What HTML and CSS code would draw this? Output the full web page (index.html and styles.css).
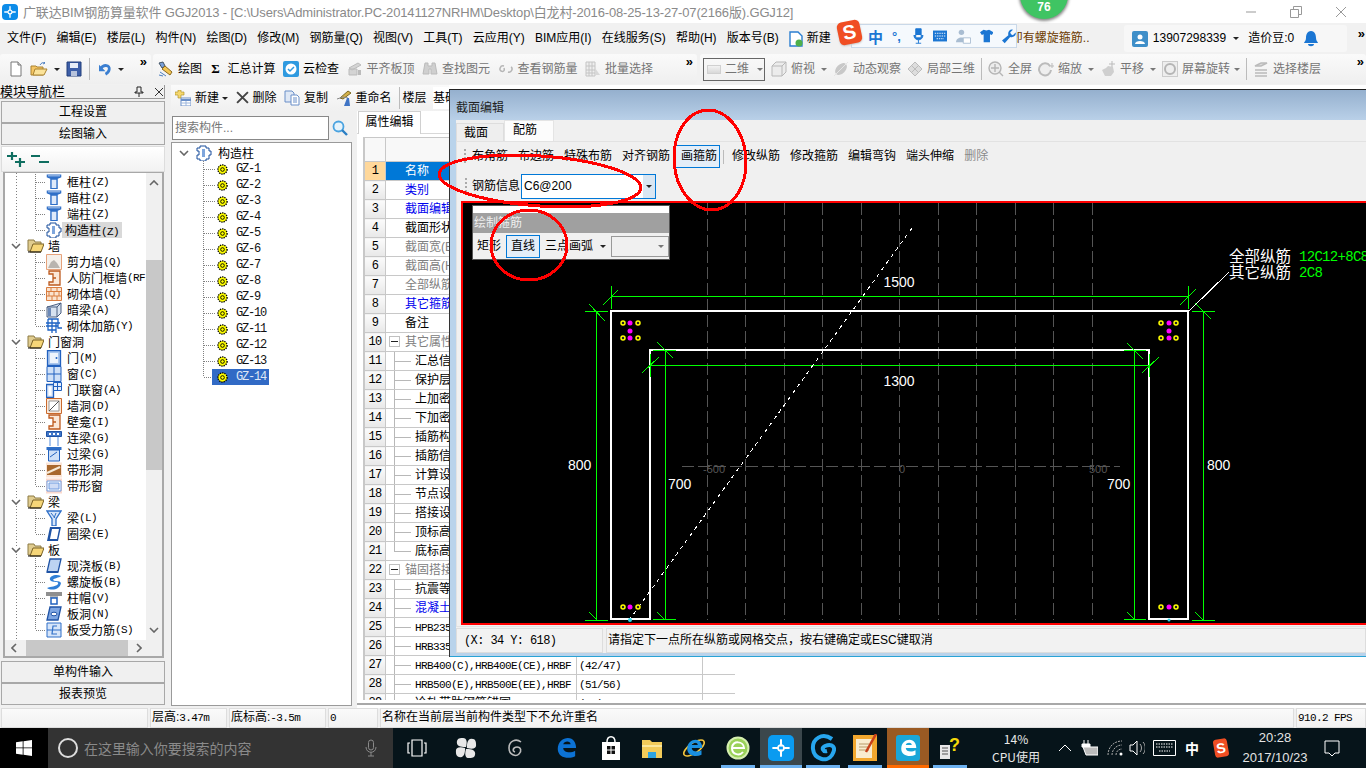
FILE: index.html
```html
<!DOCTYPE html>
<html lang="zh-CN">
<head>
<meta charset="utf-8">
<title>广联达BIM钢筋算量软件 GGJ2013</title>
<link rel="stylesheet" href="styles.css">
</head>
<body>
<svg class="sprite" width="0" height="0">
  <symbol id="i-new" viewBox="0 0 16 16"><path d="M3 1h7l3 3v11H3z" fill="#fff" stroke="#777"/><path d="M10 1v3h3" fill="#ddd" stroke="#777"/></symbol>
  <symbol id="i-open" viewBox="0 0 18 16"><path d="M1 5h5l1 1h6v8H1z" fill="#f4c563" stroke="#a98230"/><path d="M3 14l2-6h12l-3 6z" fill="#fbe39a" stroke="#a98230"/><path d="M10 4c1-2 3-3 5-2l-1-1m1 1l-2 1" fill="none" stroke="#4d7fc0"/></symbol>
  <symbol id="i-save" viewBox="0 0 16 16"><path d="M1 1h14v14H1z" fill="#3d5fa8" stroke="#233f7a"/><path d="M4 2h8v5H4z" fill="#e8eef8"/><path d="M5 10h6v5H5z" fill="#b7c3dc"/></symbol>
  <symbol id="i-undo" viewBox="0 0 14 16"><path d="M2 7C5 2 12 3 11 8c-.4 2.400-2 4-4 5" fill="none" stroke="#3b7fd1" stroke-width="3"/><path d="M0 3v7h7z" fill="#3b7fd1"/></symbol>
  <symbol id="i-draw" viewBox="0 0 16 16"><path d="M1 2l4-1 2 4-3 2z" fill="#7aa0d8" stroke="#456"/><path d="M4 8l3-3 7 6-2 3z" fill="#f3c552" stroke="#8a6a20"/><path d="M2 11l6 4M1 14l4 1" stroke="#4d7fc0"/></symbol>
  <symbol id="i-cloud" viewBox="0 0 16 16"><rect width="16" height="16" rx="2" fill="#2f9ae0"/><circle cx="8" cy="8" r="5.500" fill="#fff"/><path d="M5 8l2 2 4-4" fill="none" stroke="#2f9ae0" stroke-width="1.500"/></symbol>
  <symbol id="i-gear" viewBox="0 0 16 16"><path d="M2 7l9-5 3 2-9 5zM2 8v6h8V8z" fill="#d4d4d4" stroke="#bbb"/><path d="M11 9h3v5h-3z" fill="#bbb"/></symbol>
  <symbol id="i-bino" viewBox="0 0 16 16"><path d="M3 2h3v3h4V2h3l2 11H9V8H7v5H1z" fill="#cfcfcf" stroke="#bbb"/></symbol>
  <symbol id="i-link" viewBox="0 0 16 16"><path d="M6 5C2 4 1 9 3 10s4 0 3-3M10 11c4 1 5-4 3-5" fill="none" stroke="#b5b5b5" stroke-width="1.500"/></symbol>
  <symbol id="i-batch" viewBox="0 0 16 16"><path d="M1 1h9v14H1zM1 5h9M1 9h9M1 12h9M4 1v14M7 1v14" fill="#eee" stroke="#c4c4c4"/><path d="M10 7l5 7h-5z" fill="#d8d8d8"/></symbol>
  <symbol id="i-cube" viewBox="0 0 16 16"><path d="M1 5l4-4h10v10l-4 4H1z" fill="#ececec" stroke="#b8b8b8"/><path d="M1 5h10v10M11 5l4-4" fill="none" stroke="#b8b8b8"/></symbol>
  <symbol id="i-orbit" viewBox="0 0 16 16"><ellipse cx="8" cy="8" rx="4.500" ry="7" transform="rotate(45 8 8)" fill="#c8c8c8"/><path d="M1 15L15 1" stroke="#e5e5e5"/></symbol>
  <symbol id="i-box" viewBox="0 0 16 16"><path d="M8 1l7 7-7 7-7-7z" fill="#ddd" stroke="#bbb"/><path d="M4 4l8 8M12 4l-8 8" stroke="#bbb"/></symbol>
  <symbol id="i-zoomf" viewBox="0 0 16 16"><circle cx="7" cy="7" r="6" fill="#ececec" stroke="#b5b5b5" stroke-width="1.400"/><path d="M7 3v8M3 7h8M11 11l4 4" stroke="#b5b5b5" stroke-width="1.400"/></symbol>
  <symbol id="i-zoom" viewBox="0 0 16 16"><path d="M12 5a6 6 0 1 0 1 4" fill="#eee" stroke="#bbb" stroke-width="2"/><path d="M14 2v5M11 5h5" stroke="#bbb"/></symbol>
  <symbol id="i-pan" viewBox="0 0 16 16"><path d="M2 9l4-2 2-2 5 1 1 5-3 4H5z" fill="#cfcfcf"/><path d="M12 0v6M9 3h6" stroke="#bbb"/></symbol>
  <symbol id="i-rot" viewBox="0 0 16 16"><rect x=".5" y=".5" width="15" height="15" fill="#eee" stroke="#ccc"/><circle cx="8" cy="8" r="5" fill="none" stroke="#b5b5b5" stroke-width="2"/></symbol>
  <symbol id="i-floor" viewBox="0 0 16 16"><path d="M2 5l6-3h6L8 5zM2 9h12M2 12h12M2 15h12" fill="#ddd" stroke="#bbb" stroke-width="1.400"/></symbol>
  <symbol id="i-newb" viewBox="0 0 16 16"><path d="M0 2h3V0h3v2h3v3H6v3H3V5H0z" fill="#f5d76e" stroke="#a88a20" stroke-width=".6"/><path d="M6 8h10v8H6z" fill="#fff" stroke="#6a8fc8"/><path d="M6 10h10" stroke="#6a8fc8" stroke-width="2"/><path d="M11 11v5M6 13h10" stroke="#9db6dc"/></symbol>
  <symbol id="i-copy" viewBox="0 0 16 16"><path d="M1 1h7l2 2v9H1z" fill="#dfe8f5" stroke="#6a8fc8"/><path d="M7 5h6l2 2v8H7z" fill="#fff" stroke="#6a8fc8"/><path d="M9 8h4M9 10h4M9 12h4" stroke="#6a8fc8"/></symbol>
  <symbol id="i-rename" viewBox="0 0 16 16"><path d="M4 8l8-7 3 2-8 6z" fill="#d3b04a" stroke="#7c6a20"/><path d="M1 9l6-2 5 1" fill="none" stroke="#888"/><path d="M8 16l3-8h2l1 8z" fill="#3f74c5"/></symbol>
  <symbol id="i-col" viewBox="0 0 16 17"><path d="M0 .5h16v3l-4 1.500v11H4V5L0 3.500z" fill="#2f6fc7"/><path d="M5.500 6h5v9h-5zM1.500 1.500h13v1h-13z" fill="#dfeafa"/></symbol>
  <symbol id="i-gz" viewBox="0 0 16 16"><path d="M4 1h6v2h3v3h2v4h-2v4h-3v2H4v-2H1v-4h2V6H1V3h3z" fill="#fff" stroke="#1b4f9c"/><path d="M6 4h3v8H6z" fill="#7fa6dc"/></symbol>
  <symbol id="i-shear" viewBox="0 0 16 16"><path d="M.5 .5h15v15H.5z" fill="#f5f0ea" stroke="#e6a27b"/><path d="M2 14l3-6 3-2 3 3 3 5z" fill="#b9b4ae"/></symbol>
  <symbol id="i-frame" viewBox="0 0 16 16"><path d="M3 1h11v14H3v-3h4V4H3zM7 8h3" fill="#fbe8d8" stroke="#bd5a1e" stroke-width="1.300"/></symbol>
  <symbol id="i-brick" viewBox="0 0 16 16"><path d="M.5 1.500h15v13H.5zM.5 5.500h15M.5 10h15M5 1.500v4M11 1.500v4M3 5.500V10M8 5.500V10M13 5.500V10M6 10v4.500M11 10v4.500" fill="#fae3cf" stroke="#d97c3f"/></symbol>
  <symbol id="i-beam" viewBox="0 0 16 16"><path d="M1 5l4-1 10-3v10l-4 4H1z" fill="#d7e2f0" stroke="#4a5e80"/><path d="M1 5h10v10M11 5l4-4" fill="none" stroke="#4a5e80"/><path d="M2 6h3v8H2z" fill="#6c89b8"/></symbol>
  <symbol id="i-add" viewBox="0 0 16 16"><path d="M2 1h10v9h4M2 1v11h8M6 1v14M10 5v10M0 5h14M0 8h12" fill="none" stroke="#1e63c4" stroke-width="1.300"/></symbol>
  <symbol id="i-door" viewBox="0 0 16 16"><path d="M1.500 .5h13v15h-13z" fill="#a9c6ee" stroke="#2161bf" stroke-width="1.300"/><path d="M4 3h8v10H4z" fill="#eef4fc"/><circle cx="10.500" cy="8" r="1" fill="#2161bf"/></symbol>
  <symbol id="i-win" viewBox="0 0 16 16"><path d="M1 .5h14v15H1z" fill="#cfe0f7" stroke="#2161bf"/><path d="M8 .5v15M1 8h14" stroke="#2161bf"/></symbol>
  <symbol id="i-dw" viewBox="0 0 16 16"><path d="M.5 2.500h7v13h-7z" fill="#cfe0f7" stroke="#2161bf" stroke-width="1.300"/><path d="M2.500 4.500h3v9h-3z" fill="#fff"/><path d="M7.500 .5h8v8h-8zM11.500 .5v8M7.500 4.500h8" fill="#e5eefb" stroke="#2161bf"/></symbol>
  <symbol id="i-hole" viewBox="0 0 16 16"><path d="M.5 .5h15v15H.5z" fill="#fbe8d8" stroke="#c9692c"/><path d="M3 3h10v10H3z" fill="#fff" stroke="#999"/><path d="M3 13L13 3" stroke="#555"/></symbol>
  <symbol id="i-lb" viewBox="0 0 16 16"><path d="M.5 1.500h15v5H.5z" fill="#3f76c8" stroke="#1f53a5"/><path d="M3 3h2v2H3zM7 3h2v2H7zM11 3h2v2h-2z" fill="#fff"/><path d="M3 7h2v9H3zM11 7h2v9h-2z" fill="#a9c6ee"/></symbol>
  <symbol id="i-gl" viewBox="0 0 16 16"><path d="M.5 1h15v3H.5z" fill="#2f6fc7"/><path d="M2.500 4h11v11h-11z" fill="#cfe0f7" stroke="#2161bf"/><path d="M4 11l7-5" stroke="#2161bf"/></symbol>
  <symbol id="i-sh" viewBox="0 0 16 16"><path d="M0 .5h16v15H0z" fill="#fbe5d8"/><path d="M1 3h14v10H1z" fill="#a8682e"/><path d="M1 11l13-6" stroke="#f6ead8" stroke-width="2"/></symbol>
  <symbol id="i-sw" viewBox="0 0 16 16"><path d="M0 .5h16v15H0z" fill="#fbd9cd"/><path d="M1 3h14v10H1z" fill="#fff" stroke="#6f9be0"/><path d="M3 5h10v6H3z" fill="#cfdcf5" stroke="#6f9be0"/></symbol>
  <symbol id="i-l" viewBox="0 0 16 16"><path d="M1 1h14l-5 8v7H6V9z" fill="#d6e5f9" stroke="#2f6fc7" stroke-width="1.300"/><path d="M5 3l4 5M10 3L8 8" stroke="#2f6fc7"/></symbol>
  <symbol id="i-q" viewBox="0 0 16 16"><path d="M4 1h11l-3 14H1z" fill="#1f53a5"/><path d="M6 3h7l-2 10H4z" fill="#fff"/></symbol>
  <symbol id="i-xj" viewBox="0 0 16 16"><path d="M4 1h11l-3 13H1z" fill="#bcd3f2" stroke="#1f53a5" stroke-width="1.300"/><path d="M1 14h11" stroke="#1f53a5" stroke-width="2"/></symbol>
  <symbol id="i-lx" viewBox="0 0 16 16"><path d="M15 2C8-1 1 4 5 7c4 2 8 0 7 3-2 3-7 2-11 4 4 3 13 2 14-5-2-3-6-1-8-3 1-2 6-2 8-4z" fill="#2f7fd7"/></symbol>
  <symbol id="i-cap" viewBox="0 0 16 16"><path d="M0 2h16v4H0z" fill="#8f8f8f"/><path d="M4 6h8v2H4z" fill="#b5b5b5"/><path d="M5 8h6v6H5z" fill="#fff" stroke="#2161bf" stroke-width="1.500"/></symbol>
  <symbol id="i-bd" viewBox="0 0 16 16"><path d="M4 1h11l-3 13H1z" fill="#7ea6e2" stroke="#1f53a5" stroke-width="1.300"/><ellipse cx="8" cy="8" rx="3" ry="1.800" fill="#fff" stroke="#1f53a5"/></symbol>
  <symbol id="i-bs" viewBox="0 0 16 16"><path d="M1 1h14v14H1z" fill="#d6e5f9" stroke="#2f6fc7"/><path d="M11 4H7L6 12h5M1 8h14" fill="none" stroke="#2f6fc7" stroke-width="1.200"/></symbol>
  <symbol id="i-folder" viewBox="0 0 17 14"><path d="M1 1h6l1 2h6v9H1z" fill="#e0cc8f" stroke="#8c7a45"/><path d="M3 13l3-8h11l-3 8z" fill="#f6d678" stroke="#7a6226"/><path d="M1 13h13" stroke="#111"/></symbol>
  <symbol id="i-rebar" viewBox="0 0 12 12"><circle cx="6" cy="6" r="5" fill="#ff0" stroke="#000" stroke-width="1.500" stroke-dasharray="1.500 1"/><circle cx="6" cy="6" r="2" fill="#ff0" stroke="#000"/></symbol>
  <symbol id="i-chev" viewBox="0 0 10 6"><path d="M1 1l4 4 4-4" fill="none" stroke="#666" stroke-width="1.600"/></symbol>
  <symbol id="i-mag" viewBox="0 0 16 16"><circle cx="6.500" cy="6.500" r="5" fill="#e6f3fb" stroke="#4aa3e0" stroke-width="1.800"/><path d="M10 10l5 5" stroke="#2a7fc4" stroke-width="2.400"/></symbol>
  <symbol id="i-win10" viewBox="0 0 16 16"><path d="M0 2.300l6.700-1v6.200H0zM7.500 1.200L16 0v7.500H7.500zM0 8.300h6.700v6.400L0 13.800zM7.500 8.300H16V16l-8.500-1.200z" fill="#fff"/></symbol>
  <symbol id="i-mic" viewBox="0 0 12 18"><rect x="3.500" y="1" width="5" height="10" rx="2.500" fill="none" stroke="currentColor"/><path d="M1 8c0 7 10 7 10 0M6 13v4M3 17h6" fill="none" stroke="currentColor"/></symbol>
  <symbol id="i-fan" viewBox="0 0 24 24"><path d="M12 11C9 11 2 11 2 6s4-5 7-5 5 3 3 10zM13 12c0-3 0-10 5-10s5 4 5 7-3 5-10 3zM12 13c3 0 10 0 10 5s-4 5-7 5-5-3-3-10zM11 12c0 3 0 10-5 10s-5-4-5-7 3-5 10-3z" fill="#e8e8e8"/></symbol>
  <symbol id="i-e" viewBox="0 0 24 24"><path d="M3 13C3 5 9 1 14 1c6 0 9 5 9 11H9c0 5 8 6 13 3v6c-8 4-19 1-19-8zM9 8h8c0-4-7-4-8 0z" fill="currentColor"/></symbol>
  <symbol id="i-gld" viewBox="0 0 16 16"><path d="M8 1v5M8 10v5M1 8h4M11 8h4" fill="none" stroke="#fff" stroke-width="1.800" stroke-linecap="round"/><circle cx="8" cy="8" r="2.600" fill="none" stroke="#fff" stroke-width="1.500"/></symbol>
</svg>

<header class="titlebar">
  <span class="app-logo"><svg width="12" height="12" viewBox="0 0 16 16"><use href="#i-gld"/></svg></span>
  <span class="title-text">广联达BIM钢筋算量软件 GGJ2013 - [C:\Users\Administrator.PC-20141127NRHM\Desktop\白龙村-2016-08-25-13-27-07(2166版).GGJ12]</span>
  <span class="win-ctrls">
    <svg width="12" height="12" viewBox="0 0 12 12"><path d="M1 6h10" stroke="#999"/></svg>
    <svg width="12" height="12" viewBox="0 0 12 12"><path d="M.5 3.500h8v8h-8zM3.500 3V.5h8v8H9" fill="none" stroke="#999"/></svg>
    <svg width="12" height="12" viewBox="0 0 12 12"><path d="M1 1l10 10M11 1L1 11" stroke="#999"/></svg>
  </span>
</header>

<nav class="menubar">
  <div class="menus">
    <span>文件(F)</span><span>编辑(E)</span><span>楼层(L)</span><span>构件(N)</span><span>绘图(D)</span><span>修改(M)</span><span>钢筋量(Q)</span><span>视图(V)</span><span>工具(T)</span><span>云应用(Y)</span><span>BIM应用(I)</span><span>在线服务(S)</span><span>帮助(H)</span><span>版本号(B)</span>
  </div>
  <div class="newtask"><svg class="ic" viewBox="0 0 16 16"><path d="M2 1h8l4 4v10H2z" fill="#fff" stroke="#2b7fd1" stroke-width="1.400"/><circle cx="11" cy="12" r="3.500" fill="#4fb04a"/></svg><span>新建</span></div>
  <div class="marquee">即有螺旋箍筋..</div>
  <div class="account">
    <span class="avatar"><svg width="10" height="10" viewBox="0 0 10 10"><circle cx="5" cy="3" r="2.500" fill="#fff"/><path d="M0 10c0-4 10-4 10 0z" fill="#fff"/></svg></span>
    <span>13907298339</span><i class="caret"></i>
    <span class="beans">造价豆:0</span>
    <svg class="bell" width="14" height="16" viewBox="0 0 14 16"><path d="M7 0c4 0 5 4 5 7s2 4 2 5H0c0-1 2-2 2-5s1-7 5-7zM4 13h6c0 3-6 3-6 0z" fill="#1b76d3"/></svg>
  </div>
  <span class="more">»</span>
</nav>

<div class="toolbar">
  <div class="tseg first">
    <svg class="ic" viewBox="0 0 16 16"><use href="#i-new"/></svg>
    <svg class="ic ic18" viewBox="0 0 18 16"><use href="#i-open"/></svg><i class="caret"></i>
    <svg class="ic" viewBox="0 0 16 16"><use href="#i-save"/></svg>
    <span class="sep"></span>
    <svg class="ic-s" viewBox="0 0 14 16"><use href="#i-undo"/></svg><i class="caret"></i>
    <span class="more">»</span>
  </div>
  <div class="tseg second">
    <span class="tbtn"><svg class="ic" viewBox="0 0 16 16"><use href="#i-draw"/></svg>绘图</span>
    <span class="tbtn"><b class="sigma">Σ</b>汇总计算</span>
    <span class="tbtn"><svg class="ic" viewBox="0 0 16 16"><use href="#i-cloud"/></svg>云检查</span>
    <span class="tbtn dis"><svg class="ic" viewBox="0 0 16 16"><use href="#i-gear"/></svg>平齐板顶</span>
    <span class="tbtn dis"><svg class="ic" viewBox="0 0 16 16"><use href="#i-bino"/></svg>查找图元</span>
    <span class="tbtn dis"><svg class="ic" viewBox="0 0 16 16"><use href="#i-link"/></svg>查看钢筋量</span>
    <span class="tbtn dis"><svg class="ic" viewBox="0 0 16 16"><use href="#i-batch"/></svg>批量选择</span>
    <span class="more">»</span>
  </div>
  <div class="tseg third">
    <span class="combo"><i class="swatch"></i>二维<i class="caret gray"></i></span>
    <span class="tbtn dis"><svg class="ic" viewBox="0 0 16 16"><use href="#i-cube"/></svg>俯视<i class="caret gray"></i></span>
    <span class="tbtn dis"><svg class="ic" viewBox="0 0 16 16"><use href="#i-orbit"/></svg>动态观察</span>
    <span class="tbtn dis"><svg class="ic" viewBox="0 0 16 16"><use href="#i-box"/></svg>局部三维</span>
    <span class="sep"></span>
    <span class="tbtn dis"><svg class="ic" viewBox="0 0 16 16"><use href="#i-zoomf"/></svg>全屏</span>
    <span class="tbtn dis"><svg class="ic" viewBox="0 0 16 16"><use href="#i-zoom"/></svg>缩放<i class="caret gray"></i></span>
    <span class="tbtn dis"><svg class="ic" viewBox="0 0 16 16"><use href="#i-pan"/></svg>平移<i class="caret gray"></i></span>
    <span class="tbtn dis"><svg class="ic" viewBox="0 0 16 16"><use href="#i-rot"/></svg>屏幕旋转<i class="caret gray tight"></i></span>
    <span class="sep"></span>
    <span class="tbtn dis"><svg class="ic" viewBox="0 0 16 16"><use href="#i-floor"/></svg>选择楼层</span>
    <span class="more">»</span>
  </div>
</div>

<main class="main">
  <aside class="nav">
    <div class="nav-head"><span>模块导航栏</span>
      <svg width="10" height="11" viewBox="0 0 10 11"><path d="M3 1h4v5h2v1H1V6h2zM5 7v4" fill="none" stroke="#222"/></svg>
      <svg width="8" height="8" viewBox="0 0 8 8"><path d="M0 0l8 8M8 0L0 8" stroke="#333"/></svg>
    </div>
    <div class="nav-btn">工程设置</div>
    <div class="nav-btn">绘图输入</div>
    <div class="nav-tools">
      <svg width="18" height="15" viewBox="0 0 18 15"><path d="M0 4h10M5 0v8M8 10h10M13 6v9" stroke="#0f6e60" stroke-width="2.200"/></svg>
      <svg width="18" height="15" viewBox="0 0 18 15"><path d="M0 4h9M8 10h10" stroke="#0f6e60" stroke-width="2.200"/></svg>
    </div>
    <div class="nav-tree">
      <div class="tree-body simsun">
        <div class="kids">
          <div class="kid"><svg class="ic" viewBox="0 0 16 17"><use href="#i-col"/></svg>框柱<i class="m">(Z)</i></div>
          <div class="kid"><svg class="ic" viewBox="0 0 16 17"><use href="#i-col"/></svg>暗柱<i class="m">(Z)</i></div>
          <div class="kid"><svg class="ic" viewBox="0 0 16 17"><use href="#i-col"/></svg>端柱<i class="m">(Z)</i></div>
          <div class="kid"><svg class="ic" viewBox="0 0 16 16"><use href="#i-gz"/></svg><span class="sel-gray">构造柱<i class="m">(Z)</i></span></div>
        </div>
        <div class="grp"><svg class="chev" viewBox="0 0 10 6"><use href="#i-chev"/></svg><svg class="fold" viewBox="0 0 17 14"><use href="#i-folder"/></svg>墙</div>
        <div class="kids">
          <div class="kid"><svg class="ic" viewBox="0 0 16 16"><use href="#i-shear"/></svg>剪力墙<i class="m">(Q)</i></div>
          <div class="kid"><svg class="ic" viewBox="0 0 16 16"><use href="#i-frame"/></svg>人防门框墙<i class="m">(RF</i></div>
          <div class="kid"><svg class="ic" viewBox="0 0 16 16"><use href="#i-brick"/></svg>砌体墙<i class="m">(Q)</i></div>
          <div class="kid"><svg class="ic" viewBox="0 0 16 16"><use href="#i-beam"/></svg>暗梁<i class="m">(A)</i></div>
          <div class="kid"><svg class="ic" viewBox="0 0 16 16"><use href="#i-add"/></svg>砌体加筋<i class="m">(Y)</i></div>
        </div>
        <div class="grp"><svg class="chev" viewBox="0 0 10 6"><use href="#i-chev"/></svg><svg class="fold" viewBox="0 0 17 14"><use href="#i-folder"/></svg>门窗洞</div>
        <div class="kids">
          <div class="kid"><svg class="ic" viewBox="0 0 16 16"><use href="#i-door"/></svg>门<i class="m">(M)</i></div>
          <div class="kid"><svg class="ic" viewBox="0 0 16 16"><use href="#i-win"/></svg>窗<i class="m">(C)</i></div>
          <div class="kid"><svg class="ic" viewBox="0 0 16 16"><use href="#i-dw"/></svg>门联窗<i class="m">(A)</i></div>
          <div class="kid"><svg class="ic" viewBox="0 0 16 16"><use href="#i-hole"/></svg>墙洞<i class="m">(D)</i></div>
          <div class="kid"><svg class="ic" viewBox="0 0 16 16"><use href="#i-frame"/></svg>壁龛<i class="m">(I)</i></div>
          <div class="kid"><svg class="ic" viewBox="0 0 16 16"><use href="#i-lb"/></svg>连梁<i class="m">(G)</i></div>
          <div class="kid"><svg class="ic" viewBox="0 0 16 16"><use href="#i-gl"/></svg>过梁<i class="m">(G)</i></div>
          <div class="kid"><svg class="ic" viewBox="0 0 16 16"><use href="#i-sh"/></svg>带形洞</div>
          <div class="kid"><svg class="ic" viewBox="0 0 16 16"><use href="#i-sw"/></svg>带形窗</div>
        </div>
        <div class="grp"><svg class="chev" viewBox="0 0 10 6"><use href="#i-chev"/></svg><svg class="fold" viewBox="0 0 17 14"><use href="#i-folder"/></svg>梁</div>
        <div class="kids">
          <div class="kid"><svg class="ic" viewBox="0 0 16 16"><use href="#i-l"/></svg>梁<i class="m">(L)</i></div>
          <div class="kid"><svg class="ic" viewBox="0 0 16 16"><use href="#i-q"/></svg>圈梁<i class="m">(E)</i></div>
        </div>
        <div class="grp"><svg class="chev" viewBox="0 0 10 6"><use href="#i-chev"/></svg><svg class="fold" viewBox="0 0 17 14"><use href="#i-folder"/></svg>板</div>
        <div class="kids">
          <div class="kid"><svg class="ic" viewBox="0 0 16 16"><use href="#i-xj"/></svg>现浇板<i class="m">(B)</i></div>
          <div class="kid"><svg class="ic" viewBox="0 0 16 16"><use href="#i-lx"/></svg>螺旋板<i class="m">(B)</i></div>
          <div class="kid"><svg class="ic" viewBox="0 0 16 16"><use href="#i-cap"/></svg>柱帽<i class="m">(V)</i></div>
          <div class="kid"><svg class="ic" viewBox="0 0 16 16"><use href="#i-bd"/></svg>板洞<i class="m">(N)</i></div>
          <div class="kid"><svg class="ic" viewBox="0 0 16 16"><use href="#i-bs"/></svg>板受力筋<i class="m">(S)</i></div>
        </div>
      </div>
      <div class="vscroll"><svg class="sb-a" width="10" height="6" viewBox="0 0 10 6"><path d="M1 5l4-4 4 4" fill="none" stroke="#666" stroke-width="1.600"/></svg><i class="vthumb"></i><svg class="sb-a" width="10" height="6" viewBox="0 0 10 6"><path d="M1 1l4 4 4-4" fill="none" stroke="#666" stroke-width="1.600"/></svg></div>
      <div class="hscroll"><svg width="6" height="10" viewBox="0 0 6 10"><path d="M5 1L1 5l4 4" fill="none" stroke="#666" stroke-width="1.600"/></svg><i class="hthumb"></i><svg width="6" height="10" viewBox="0 0 6 10"><path d="M1 1l4 4-4 4" fill="none" stroke="#666" stroke-width="1.600"/></svg></div>
      <div class="corner"></div>
    </div>
    <div class="nav-btn low">单构件输入</div>
    <div class="nav-btn">报表预览</div>
  </aside>

  <section class="work">
    <div class="cmdbar">
      <span class="cbtn"><svg class="ic" viewBox="0 0 16 16"><use href="#i-newb"/></svg>新建<i class="caret"></i></span>
      <span class="cbtn"><svg class="ic-x" viewBox="0 0 12 12"><path d="M1 1l10 10M11 1L1 11" stroke="#444" stroke-width="1.800"/></svg>删除</span>
      <span class="cbtn"><svg class="ic" viewBox="0 0 16 16"><use href="#i-copy"/></svg>复制</span>
      <span class="cbtn"><svg class="ic" viewBox="0 0 16 16"><use href="#i-rename"/></svg>重命名</span>
      <span class="sep"></span>
      <span class="cbtn">楼层</span>
      <span class="cbtn white">基础层</span>
    </div>
    <div class="work-row">
      <div class="mid">
        <div class="search"><span class="search-in">搜索构件...</span><svg class="ic" viewBox="0 0 16 16"><use href="#i-mag"/></svg></div>
        <div class="mid-tree simsun">
          <div class="root"><svg class="chev" viewBox="0 0 10 6"><use href="#i-chev"/></svg><svg class="ic" viewBox="0 0 16 16"><use href="#i-gz"/></svg>构造柱</div>
          <div class="gz"><svg class="reb" viewBox="0 0 12 12"><use href="#i-rebar"/></svg><i class="m">GZ-1</i></div>
          <div class="gz"><svg class="reb" viewBox="0 0 12 12"><use href="#i-rebar"/></svg><i class="m">GZ-2</i></div>
          <div class="gz"><svg class="reb" viewBox="0 0 12 12"><use href="#i-rebar"/></svg><i class="m">GZ-3</i></div>
          <div class="gz"><svg class="reb" viewBox="0 0 12 12"><use href="#i-rebar"/></svg><i class="m">GZ-4</i></div>
          <div class="gz"><svg class="reb" viewBox="0 0 12 12"><use href="#i-rebar"/></svg><i class="m">GZ-5</i></div>
          <div class="gz"><svg class="reb" viewBox="0 0 12 12"><use href="#i-rebar"/></svg><i class="m">GZ-6</i></div>
          <div class="gz"><svg class="reb" viewBox="0 0 12 12"><use href="#i-rebar"/></svg><i class="m">GZ-7</i></div>
          <div class="gz"><svg class="reb" viewBox="0 0 12 12"><use href="#i-rebar"/></svg><i class="m">GZ-8</i></div>
          <div class="gz"><svg class="reb" viewBox="0 0 12 12"><use href="#i-rebar"/></svg><i class="m">GZ-9</i></div>
          <div class="gz"><svg class="reb" viewBox="0 0 12 12"><use href="#i-rebar"/></svg><i class="m">GZ-10</i></div>
          <div class="gz"><svg class="reb" viewBox="0 0 12 12"><use href="#i-rebar"/></svg><i class="m">GZ-11</i></div>
          <div class="gz"><svg class="reb" viewBox="0 0 12 12"><use href="#i-rebar"/></svg><i class="m">GZ-12</i></div>
          <div class="gz"><svg class="reb" viewBox="0 0 12 12"><use href="#i-rebar"/></svg><i class="m">GZ-13</i></div>
          <div class="gz sel"><span class="gz-pick"><svg class="reb" viewBox="0 0 12 12"><use href="#i-rebar"/></svg><i class="m">GZ-14</i></span></div>
        </div>
      </div>
      <div class="props">
        <div class="tabbar"><span class="tab-on">属性编辑</span></div>
        <div class="props-body">
          <div class="grid-wrap">
            <table class="grid">
              <colgroup><col class="c0"><col class="c1"><col class="c2"><col class="c3"></colgroup>
              <tr class="head"><th></th><th></th><th></th><th></th></tr>
              <tr class="cur"><th class="hot">1</th><td>名称</td><td></td><td></td></tr>
              <tr><th>2</th><td class="blue">类别</td><td></td><td></td></tr>
              <tr><th>3</th><td class="blue">截面编辑</td><td></td><td></td></tr>
              <tr><th>4</th><td>截面形状</td><td></td><td></td></tr>
              <tr><th>5</th><td class="gr">截面宽(B边)</td><td></td><td></td></tr>
              <tr><th>6</th><td class="gr">截面高(H边)</td><td></td><td></td></tr>
              <tr><th>7</th><td class="gr">全部纵筋</td><td></td><td></td></tr>
              <tr><th>8</th><td class="blue">其它箍筋</td><td></td><td></td></tr>
              <tr><th>9</th><td>备注</td><td></td><td></td></tr>
              <tr><th>10</th><td class="sec"><i class="minus"></i>其它属性</td><td></td><td></td></tr>
              <tr><th>11</th><td class="tw">汇总信息</td><td></td><td></td></tr>
              <tr><th>12</th><td class="tw">保护层厚度</td><td></td><td></td></tr>
              <tr><th>13</th><td class="tw">上加密范围</td><td></td><td></td></tr>
              <tr><th>14</th><td class="tw">下加密范围</td><td></td><td></td></tr>
              <tr><th>15</th><td class="tw">插筋构造</td><td></td><td></td></tr>
              <tr><th>16</th><td class="tw">插筋信息</td><td></td><td></td></tr>
              <tr><th>17</th><td class="tw">计算设置</td><td></td><td></td></tr>
              <tr><th>18</th><td class="tw">节点设置</td><td></td><td></td></tr>
              <tr><th>19</th><td class="tw">搭接设置</td><td></td><td></td></tr>
              <tr><th>20</th><td class="tw">顶标高(m)</td><td></td><td></td></tr>
              <tr><th>21</th><td class="tw end">底标高(m)</td><td></td><td></td></tr>
              <tr><th>22</th><td class="sec"><i class="minus"></i>锚固搭接</td><td></td><td></td></tr>
              <tr><th>23</th><td class="tw">抗震等级</td><td></td><td></td></tr>
              <tr><th>24</th><td class="tw blue">混凝土强度等级</td><td></td><td></td></tr>
              <tr><th>25</th><td class="tw"><i class="m">HPB235(A)</i></td><td></td><td></td></tr>
              <tr><th>26</th><td class="tw"><i class="m">HRB335(B)</i></td><td></td><td></td></tr>
              <tr><th>27</th><td class="tw"><i class="m">HRB400(C),HRB400E(CE),HRBF</i></td><td class="val"><i class="m">(42/47)</i></td><td></td></tr>
              <tr><th>28</th><td class="tw"><i class="m">HRB500(E),HRB500E(EE),HRBF</i></td><td class="val"><i class="m">(51/56)</i></td><td></td></tr>
              <tr><th>29</th><td class="tw">冷轧带肋钢筋锚固</td><td class="val"><i class="m">(48)</i></td><td></td></tr>
            </table>
          </div>
        </div>
      </div>
    </div>
  </section>
</main>

<footer class="status">
  <span class="st s0"></span>
  <span class="st s1">层高:<i class="m">3.47m</i></span>
  <span class="st s2">底标高:<i class="m">-3.5m</i></span>
  <span class="st s3"><i class="m">0</i></span>
  <span class="st s4">名称在当前层当前构件类型下不允许重名</span>
  <span class="st s5"><i class="m">910.2 FPS</i></span>
</footer>

<div class="taskbar">
  <span class="start"><svg width="16" height="16" viewBox="0 0 16 16"><use href="#i-win10"/></svg></span>
  <div class="cortana">
    <i class="ring"></i><span class="ph">在这里输入你要搜索的内容</span>
    <svg class="cmic" width="12" height="18" viewBox="0 0 12 18"><use href="#i-mic"/></svg>
  </div>
  <div class="apps">
    <span class="app"><svg width="20" height="18" viewBox="0 0 20 18"><path d="M5 1h10v16H5zM3 4H1v10h2M17 4h2v10h-2" fill="none" stroke="#fff" stroke-width="1.200"/></svg></span>
    <span class="app"><svg width="22" height="22" viewBox="0 0 24 24"><use href="#i-fan"/></svg></span>
    <span class="app"><svg width="20" height="20" viewBox="0 0 20 20"><path d="M15 4C10 0 3 3 3 10s7 9 10 6 2-7-2-7-5 4-2 5" fill="none" stroke="#bbb" stroke-width="1.600"/></svg></span>
    <span class="app"><svg class="edge" width="22" height="22" viewBox="0 0 24 24"><use href="#i-e"/></svg></span>
    <span class="app"><svg width="20" height="24" viewBox="0 0 20 24"><path d="M1 6h18v18H1z" fill="#fff"/><path d="M6 6c0-7 8-7 8 0" fill="none" stroke="#fff" stroke-width="1.500"/><path d="M6 10h3.500v3.500H6zM10.500 10H14v3.500h-3.500zM6 14.500h3.500V18H6zM10.500 14.500H14V18h-3.500z" fill="#111"/></svg></span>
    <span class="app"><svg width="22" height="22" viewBox="0 0 22 22"><path d="M1 3h8l2 2h10v16H1z" fill="#f2cb5a"/><path d="M1 9h20" stroke="#fbe79c" stroke-width="2"/><path d="M7 15h8v6H7z" fill="#2ea3e0"/></svg></span>
    <span class="app"><svg class="ie" width="24" height="24" viewBox="0 0 24 24"><ellipse cx="12" cy="12" rx="12" ry="5" transform="rotate(-35 12 12)" fill="none" stroke="#f2c43c" stroke-width="1.600"/><use href="#i-e" x="3" y="3" width="18" height="18"/></svg></span>
    <span class="app run"><svg width="24" height="24" viewBox="0 0 24 24"><circle cx="12" cy="12" r="10.500" fill="#9ad15a" stroke="#d5efb0" stroke-width="2"/><path d="M6 12c0-8 12-7 12 0H6zm0 0c0 7 8 8 11 4" fill="none" stroke="#fff" stroke-width="2"/></svg></span>
    <span class="app run active"><span class="gld"><svg width="18" height="18" viewBox="0 0 16 16"><use href="#i-gld"/></svg></span></span>
    <span class="app run"><svg width="26" height="28" viewBox="0 0 26 28"><path d="M22 5C12-2 2 5 3 15s14 14 19 6 0-12-7-9c-4 2-2 6 2 5" fill="none" stroke="#27a6ee" stroke-width="4"/></svg></span>
    <span class="app run"><span class="note"><svg width="24" height="28" viewBox="0 0 24 28"><path d="M0 1h24v26H0z" fill="#f2a72e"/><path d="M3 5h16v19H3z" fill="#f9ecd0"/><path d="M6 10h10M6 13h10M6 16h10" stroke="#b89a6a"/><path d="M23 0L13 18" stroke="#c8401a" stroke-width="2.500"/></svg></span></span>
    <span class="app run-o"><span class="ie2"><svg class="ewhite" width="18" height="18" viewBox="0 0 24 24"><use href="#i-e"/></svg></span></span>
    <span class="app run"><svg width="22" height="24" viewBox="0 0 22 24"><path d="M1 9h10v14H1z" fill="#e8e8e8"/><path d="M3 12h6M3 15h6M3 18h6" stroke="#555"/><text class="q-mark" x="10" y="15">?</text></svg></span>
  </div>
  <div class="tray">
    <span class="cpu"><span>14%</span><span>CPU使用</span></span>
    <span class="ti t24"><svg width="14" height="8" viewBox="0 0 14 8"><path d="M1 7l6-6 6 6" fill="none" stroke="#fff"/></svg></span>
    <span class="ti t25"><svg width="17" height="16" viewBox="0 0 17 16"><path d="M3 0v4M7 0v4M1 4h8v3H1zM5 7v3" stroke="#fff" fill="#fff"/><path d="M2 7h15v8H5z" fill="#bbb" stroke="#fff"/></svg></span>
    <span class="ti t25"><svg width="16" height="16" viewBox="0 0 16 16"><path d="M1 15C1 7 7 1 15 1M5 15c0-5 4-10 10-10M9 15c0-3 2-6 6-6" fill="none" stroke="#aaa" stroke-dasharray="2 1"/><circle cx="14" cy="14" r="1.500" fill="#fff"/></svg></span>
    <span class="ti t19"><svg width="16" height="16" viewBox="0 0 16 16"><path d="M1 5h3l4-4v14l-4-4H1z" fill="none" stroke="#fff"/><path d="M11 4c2 2 2 6 0 8M14 2c3 3 3 9 0 12" fill="none" stroke="#aaa"/></svg></span>
    <span class="ti t36"><svg width="23" height="16" viewBox="0 0 23 16"><path d="M.5 .5h22v15H.5z" fill="none" stroke="#fff"/><path d="M3 4h17M3 7h17M6 11h11" stroke="#fff" stroke-dasharray="1.500 1"/></svg></span>
    <span class="ti t20 zh">中</span>
    <span class="ti t38"><span class="s-mini">S</span></span>
    <span class="clock"><span>20:28</span><span>2017/10/23</span></span>
    <span class="ti t44"><svg width="16" height="16" viewBox="0 0 16 16"><path d="M1 1h14v12h-4l-3 3-3-3H1z" fill="none" stroke="#fff"/></svg></span>
  </div>
</div>

<div class="dialog">
  <div class="dlg-title">截面编辑</div>
  <div class="dlg-frame">
    <div class="dlg-inner">
      <div class="dlg-tabs"><span class="dt">截面</span><span class="dt on">配筋</span></div>
      <div class="dlg-panel">
        <div class="dlg-row one">
          <i class="grip"></i>
          <span class="dbtn">布角筋</span><span class="dbtn">布边筋</span><span class="dbtn">特殊布筋</span><span class="dbtn">对齐钢筋</span>
          <span class="dbtn active">画箍筋</span>
          <span class="sep"></span>
          <span class="dbtn">修改纵筋</span><span class="dbtn">修改箍筋</span><span class="dbtn">编辑弯钩</span><span class="dbtn">端头伸缩</span><span class="dbtn off">删除</span>
        </div>
        <div class="dlg-row two">
          <i class="grip"></i>
          <span class="lbl">钢筋信息</span>
          <span class="rebar-in">C6@200<i class="drop"><i class="caret"></i></i></span>
        </div>
        <div class="canvas">
          <svg class="cad" width="903" height="420" viewBox="463 203 903 420">
            <g class="grid-v">
              <path d="M707 203V620M745.500 203V620M784 203V620M822.500 203V620M861 203V620M899.500 203V620M938 203V620M976.500 203V620M1015 203V620M1053.500 203V620M1092 203V620"/>
              <path d="M682 466H1120"/>
            </g>
            <text class="t-grid" x="703" y="473">-500</text>
            <text class="t-grid" x="899" y="473">0</text>
            <text class="t-grid" x="1089" y="473">500</text>
            <path class="outline" d="M611 619V311H1188V619H1149V350H650V619Z"/>
            <g class="dim">
              <path d="M611 296.500H1188M611 286V309M1188 286V309M603 305L618 290M1180 305L1196 289"/>
              <path d="M596.500 311V620M585 311H608M589 304L605 321M585 620H608M589 612L597 620"/>
              <path d="M1203.500 311V620M1192 311H1215M1195 303L1211 319M1192 620H1215M1195 612L1203 620"/>
              <path d="M650 365.500H1149M650 354V377M1149 354V377M642 373L659 357M1142 373L1159 357"/>
              <path d="M665.500 350V620M653 350H676M657 342L673 358M653 619H676M657 612L665 620"/>
              <path d="M1134.500 350V620M1124 350H1146M1127 343L1143 359M1124 619H1146M1127 612L1135 620"/>
            </g>
            <path class="leader" d="M1189 311L1229 272"/>
            <path class="rubber" d="M912 228L630 619"/>
            <g class="dots-y">
              <circle cx="623" cy="323" r="2"/><circle cx="638" cy="323" r="2"/><circle cx="623" cy="338" r="2"/><circle cx="638" cy="338" r="2"/>
              <circle cx="1161" cy="323" r="2"/><circle cx="1176" cy="323" r="2"/><circle cx="1161" cy="338" r="2"/><circle cx="1176" cy="338" r="2"/>
              <circle cx="623" cy="607" r="2"/><circle cx="638" cy="607" r="2"/><circle cx="1161" cy="607" r="2"/><circle cx="1176" cy="607" r="2"/>
            </g>
            <g class="dots-m">
              <circle cx="630" cy="323" r="2.500"/><circle cx="630" cy="331" r="2.500"/><circle cx="630" cy="338" r="2.500"/>
              <circle cx="1169" cy="323" r="2.500"/><circle cx="1169" cy="331" r="2.500"/><circle cx="1169" cy="338" r="2.500"/>
              <circle cx="630" cy="607" r="2.500"/><circle cx="1169" cy="607" r="2.500"/>
            </g>
            <circle class="snap" cx="630" cy="620" r="2"/>
            <circle class="snap" cx="1169" cy="620" r="1.500"/>
            <text class="t-dim mid-anchor" x="899" y="287">1500</text>
            <text class="t-dim mid-anchor" x="899" y="386">1300</text>
            <text class="t-dim" x="568" y="470">800</text>
            <text class="t-dim" x="668" y="489">700</text>
            <text class="t-dim" x="1107" y="489">700</text>
            <text class="t-dim" x="1207" y="470">800</text>
            <text class="t-label" x="1229" y="262">全部纵筋</text>
            <text class="t-label" x="1229" y="278">其它纵筋</text>
            <text class="t-green" x="1299" y="261">12C12+8C8</text>
            <text class="t-green" x="1299" y="277">2C8</text>
          </svg>
          <div class="float">
            <div class="float-top"></div>
            <div class="float-title">绘制箍筋</div>
            <div class="float-row">
              <span class="fbtn first-f">矩形</span>
              <span class="fbtn active">直线</span>
              <span class="fbtn">三点画弧</span><i class="caret"></i>
              <span class="fcombo"><i class="caret gray"></i></span>
            </div>
          </div>
        </div>
      </div>
      <div class="dlg-status">
        <span class="ds coord"><i class="m">(X: 34 Y: 618)</i></span>
        <span class="ds msg">请指定下一点所在纵筋或网格交点，按右键确定或ESC键取消</span>
      </div>
    </div>
  </div>
</div>

<div class="badge76">76</div>

<div class="ime">
  <span class="ime-logo">S</span>
  <span class="ime-zh">中</span>
  <span class="ime-dot">°,</span>
  <svg width="12" height="18" viewBox="0 0 12 18"><path d="M3 1h6v10H3zM1 8c0 7 10 7 10 0M6 13v4M3 17h6" fill="#1b76d3" stroke="#1b76d3"/></svg>
  <svg width="16" height="12" viewBox="0 0 16 12"><path d="M0 0h16v12H0z" fill="#1b76d3"/><path d="M2 3h12M2 6h12M4 9h8" stroke="#fff" stroke-dasharray="1.500 1"/></svg>
  <svg width="16" height="16" viewBox="0 0 16 16"><circle cx="6" cy="4" r="3" fill="#a9bdd2"/><path d="M0 15c0-7 12-7 12 0z" fill="#a9bdd2"/><path d="M8 10h8v6H8z" fill="#fff" stroke="#a9bdd2"/></svg>
  <svg width="15" height="14" viewBox="0 0 15 14"><path d="M4 0l3 1 3-1 5 3-2 3-2-1v9H4V5L2 6 0 3z" fill="#1b76d3"/></svg>
  <svg width="15" height="15" viewBox="0 0 15 15"><path d="M15 3l-3 3-2-1-1-2 3-3C9-1 6 2 7 6L0 12l3 3 6-7c4 1 7-2 6-5z" fill="#1b76d3"/></svg>
</div>

<svg class="marks" width="1366" height="768" viewBox="0 0 1366 768">
  <ellipse cx="540" cy="181" rx="101" ry="25" transform="rotate(4 540 181)"/>
  <ellipse cx="710" cy="160" rx="36" ry="50" transform="rotate(-4 710 160)"/>
  <ellipse cx="529" cy="245" rx="38" ry="35"/>
</svg>
</body>
</html>
```

FILE: styles.css
```css
* { box-sizing: border-box; }
html, body { margin: 0; padding: 0; }
body {
  width: 1366px; height: 768px; overflow: hidden; position: relative;
  display: flex; flex-direction: column;
  background: #f0f0f0; color: #000;
  font: 12px/1.2 "Liberation Sans", "Noto Sans CJK SC", sans-serif;
}
i { font-style: normal; }
.sprite { position: absolute; width: 0; height: 0; }
.ic { width: 16px; height: 16px; flex: none; }
.ic18 { width: 18px; }
.ic-s { width: 13px; height: 15px; flex: none; }
.ic-x { width: 13px; height: 13px; flex: none; }
.m { font: 11px/1 "Liberation Mono", monospace; letter-spacing: -.6px; }
.simsun { font-family: "Noto Sans CJK SC", sans-serif; }
.caret { width: 0; height: 0; border: 3px solid transparent; border-top: 3px solid #222; border-bottom: 0; display: inline-block; flex: none; }
.caret.gray { border-top-color: #777; }
.sep { width: 1px; height: 22px; background: #bbb; flex: none; }
.more { font: bold 13px "Liberation Sans", sans-serif; line-height: 10px; align-self: flex-start; margin-top: 3px; }

/* title bar */
.titlebar { height: 23px; background: #fff; display: flex; align-items: center; flex: none; }
.app-logo { width: 16px; height: 16px; border-radius: 4px; background: #0c8ce9; margin-left: 2px; display: flex; align-items: center; justify-content: center; }
.title-text { margin-left: 5px; font: 13px "Liberation Sans", "Noto Sans CJK SC", sans-serif; letter-spacing: -.15px; color: #8a8a8a; white-space: nowrap; }
.win-ctrls { margin-left: auto; display: flex; gap: 33px; padding-right: 19px; align-items: center; }

/* menu */
.menubar { height: 31px; flex: none; display: flex; align-items: center; background: #f1f1f1; position: relative; padding-left: 7px; }
.menus { display: flex; gap: 10.200px; white-space: nowrap; }
.newtask { display: flex; gap: 3px; align-items: center; margin-left: 9px; }
.marquee { margin-left: 180px; color: #6b3a00; width: 100px; white-space: nowrap; }
.account { display: flex; align-items: center; margin-left: 13px; background: #f7f7f7; height: 27px; padding-left: 8px; width: 223px; border-radius: 3px; }
.avatar { width: 16px; height: 16px; background: #3f8fc9; display: flex; align-items: center; justify-content: center; border-radius: 2px; margin-right: 5px; }
.account .caret { margin-left: 7px; }
.beans { margin-left: 9px; }
.bell { margin-left: 10px; }
.menubar > .more { position: absolute; right: 1px; top: 6px; margin: 0; }

/* toolbar */
.toolbar { height: 31px; flex: none; display: flex; padding-top: 0; background: #f1f1f1; }
.tseg { height: 30px; display: flex; align-items: center; background: linear-gradient(#fafafa, #efefef); border-radius: 3px; }
.tseg .more { margin-top: 3px; margin-left: auto; }
.first { width: 151px; padding-left: 8px; gap: 6px; margin-right: 2px; }
.first .more { padding-right: 4px; }
.first .sep { margin-left: 1px; margin-right: 3px; }
.second { width: 544px; padding-left: 5px; gap: 7.500px; margin-right: 3px; }
.second .more { padding-right: 4px; }
.third { flex: 1; padding-left: 3px; gap: 6px; }
.third .more { padding-right: 2px; }
.tbtn { display: inline-flex; align-items: center; gap: 4px; white-space: nowrap; flex: none; }
.tbtn.dis { color: #757575; }
.tbtn .caret { margin-left: 2px; }
.tight { margin-left: 0 !important; }
.sigma { font: bold 13px "Liberation Serif", serif; width: 12px; text-align: center; margin-right: 2px; }
.combo { display: inline-flex; align-items: center; gap: 4px; width: 62px; height: 23px; border: 1px solid #666; padding-left: 3px; color: #757575; flex: none; }
.swatch { width: 14px; height: 9px; background: linear-gradient(#f2f2f2, #d8d8d8); border: 1px solid #d0d0d0; }
.combo .caret { margin-left: 4px; }

/* main */
.main { height: 623px; flex: none; display: flex; background: #f0f0f0; }
.nav { width: 171px; flex: none; display: flex; flex-direction: column; padding-left: 1px; padding-right: 6px; }
.nav-head { height: 14px; flex: none; display: flex; align-items: center; border: 1px solid #999; border-top: 0; border-left: 0; background: #f0f0f0; font-size: 13px; line-height: 14px; margin-left: -1px; white-space: nowrap; }
.nav-head span { width: 134px; flex: none; }
.nav-head svg + svg { margin-left: 11px; }
.nav-btn { height: 22px; flex: none; text-align: center; line-height: 20px; font-size: 12px; border: 1px solid #a8a8a8; background: #f0f0f0; }
.nav-head + .nav-btn { margin-top: 2px; }
.nav-tools { height: 26px; flex: none; margin-top: 1px; display: flex; align-items: center; gap: 6px; padding-left: 5px; background: linear-gradient(#fff, #f2f2f2); border: 1px solid #ddd; }
.nav-tree { height: 486px; flex: none; display: grid; grid-template-columns: 1fr 16px; grid-template-rows: 1fr 16px; border: 2px solid #a8a8a8; border-top-width: 1px; margin: 0 1px 0 2px; background: #fff; overflow: hidden; }
.low { margin-top: 3px; }
.tree-body { overflow: hidden; padding-top: 1px; font-size: 12px; background: repeating-linear-gradient(#808080 0 1px, transparent 1px 3px) 11px 0/1px 100% no-repeat; }
.kid { height: 16px; display: flex; align-items: center; white-space: nowrap; padding-left: 41px;
  background:
    repeating-linear-gradient(#808080 0 1px, transparent 1px 2px) 30px 0/1px 100% no-repeat,
    repeating-linear-gradient(90deg, #808080 0 1px, transparent 1px 2px) 31px 50%/10px 1px no-repeat; }
.kid:last-child { background-size: 1px 50%, 10px 1px; }
.kid .ic { margin-right: 5px; }
.sel-gray { background: #d9d9d9; padding: 0 3px; margin-left: -4px; line-height: 16px; display: inline-block; height: 16px; }
.kid:has(.sel-gray) .ic { margin-right: 4px; }
.grp { height: 16px; display: flex; align-items: center; padding-left: 6px; }
.chev { width: 10px; height: 6px; background: #fff; flex: none; }
.fold { width: 17px; height: 14px; margin-left: 6px; margin-right: 4px; flex: none; }
.vscroll { grid-row: 1; grid-column: 2; background: #f0f0f0; display: flex; flex-direction: column; align-items: center; padding: 7px 0; overflow: hidden; }
.vthumb { width: 16px; height: 210px; background: #c8c8c8; margin-top: 74px; margin-bottom: auto; }
.sb-a { flex: none; }
.hscroll { grid-row: 2; grid-column: 1; background: #f0f0f0; display: flex; align-items: center; padding: 0 4px 0 6px; justify-content: space-between; }
.hthumb { width: 102px; height: 16px; background: #c8c8c8; }
.corner { background: #f0f0f0; }

.work { flex: 1; display: flex; flex-direction: column; min-width: 0; background: #fff; }
.cmdbar { height: 26px; width: 278px; overflow: hidden; flex: none; display: flex; align-items: center; background: linear-gradient(#fafafa, #f0f0f0); padding-left: 4px; gap: 7.500px; white-space: nowrap; }
.cbtn { display: inline-flex; align-items: center; gap: 4px; flex: none; }
.cbtn.white { background: #fff; padding: 4px 0; margin-left: -1px; }
.cmdbar .sep { margin-right: -5px; }
.cmdbar .caret { margin-left: -1px; }
.work-row { flex: 1; display: flex; min-height: 0; background: #f0f0f0; }
.mid { width: 181px; flex: none; display: flex; flex-direction: column; margin-right: 5px; }
.search { height: 31px; flex: none; display: flex; align-items: center; gap: 3px; padding: 5px 0 2px 1px; }
.search-in { width: 157px; height: 24px; border: 1px solid #888; background: #fff; color: #777; line-height: 22px; padding-left: 2px; font-size: 12px; }
.mid-tree { flex: 1; background: #fff; border: 1px solid #9a9a9a; padding-top: 2px; margin-bottom: 2px; }
.root { height: 16px; display: flex; align-items: center; padding-left: 7px; gap: 7px; }
.root .ic { margin-right: -1px; }
.gz { height: 16px; display: flex; align-items: center; padding-left: 45px; white-space: nowrap;
  background:
    repeating-linear-gradient(#808080 0 1px, transparent 1px 2px) 31px 0/1px 100% no-repeat,
    repeating-linear-gradient(90deg, #808080 0 1px, transparent 1px 2px) 32px 50%/11px 1px no-repeat; }
.gz:last-child { background-size: 1px 50%, 11px 1px; }
.reb { width: 11px; height: 11px; flex: none; margin-right: 8px; }
.gz .m { font-size: 12px; letter-spacing: -1.200px; color: #111; }
.gz.sel { padding-left: 40px; }
.gz-pick { display: flex; align-items: center; width: 57px; height: 16px; padding-left: 5px; background: #316ac5; }
.gz-pick .m { color: #dfe7f5; }

.props { flex: 1; min-width: 0; display: flex; flex-direction: column; background: #fff; }
.tabbar { height: 23px; flex: none; background: #fff; padding-left: 1px; border-bottom: 1px solid #d8d8d8; display: flex; align-items: flex-end; }
.tab-on { width: 63px; height: 23px; border: 1px solid #d0d0d0; border-bottom: 0; background: #fff; text-align: center; font-size: 12px; line-height: 20px; margin-bottom: -1px; }
.props-body { flex: 1; padding: 3px 0 0 6px; border-bottom: 2px solid #a8a8a8; min-height: 0; overflow: hidden; margin-bottom: 3px; }
.grid-wrap { height: 563px; overflow: hidden; width: 372px; border-left: 1px solid #c8c8c8; }
.grid { table-layout: fixed; border-collapse: collapse; width: 371px; }
.c0 { width: 21px; } .c1 { width: 191px; } .c2 { width: 126px; } .c3 { width: 33px; }
.grid tr { height: 19px; }
.grid tr.head { height: 24px; }
.grid th, .grid td { border: 1px solid #c8c8c8; padding: 0; height: 19px; font-weight: 400; white-space: nowrap; overflow: hidden; font-size: 12px; line-height: 16px; }
.grid th { background: linear-gradient(#fbfbfb, #e8e8e8); text-align: center; font-family: "Liberation Mono", monospace; font-size: 12px; letter-spacing: -.6px; }
.grid td { padding-left: 19px; }
.grid .head th { height: 24px; background: #f8f8f8; }
.cur td:nth-child(2) { background: #0078d7; color: #fff; }
.hot { background: #ffd89b !important; }
.blue { color: #0000ee; }
.gr { color: #808080; }
.grid td.sec { color: #808080; padding-left: 3px; }
.minus { display: inline-block; width: 11px; height: 11px; margin-right: 5px; border: 1px solid #c0c0c0; vertical-align: -1px;
  background: linear-gradient(#222, #222) center/7px 1px no-repeat; }
.grid td.tw { padding-left: 29px;
  background:
    linear-gradient(#b8b8b8, #b8b8b8) 8px 0/1px 100% no-repeat,
    linear-gradient(#b8b8b8, #b8b8b8) 8px 50%/17px 1px no-repeat; }
.grid td.tw.end { background-size: 1px 50%, 17px 1px; }
.grid td.val { padding-left: 2px; }

/* status */
.status { height: 20px; flex: none; display: flex; gap: 2px; padding: 0 0 0 1px; background: #f0f0f0; }
.st { border: 1px solid #ddd; background: linear-gradient(#fafafa, #f2f2f2); line-height: 17px; padding-left: 1px; white-space: nowrap; overflow: hidden; }
.s0 { width: 147px; } .s1 { width: 77px; } .s2 { width: 97px; } .s3 { width: 50px; }
.s4 { width: 914px; } .s5 { flex: 1; }

/* taskbar */
.taskbar { height: 40px; flex: none; display: flex; background: #06141a; color: #fff; }
.start { width: 48px; background: #000; display: flex; align-items: center; justify-content: center; }
.cortana { width: 345px; background: #333; display: flex; align-items: center; padding-left: 10px; }
.ring { width: 20px; height: 20px; border-radius: 50%; border: 2.500px solid #ddd; flex: none; }
.ph { margin-left: 6px; color: #8a8a8a; font-size: 14px; font-family: "Noto Sans CJK SC", sans-serif; letter-spacing: -.05px; }
.cmic { margin-left: auto; margin-right: 16px; color: #8a8a8a; }
.apps { display: grid; grid-template-columns: 48px 50px 50px 50px 40px 42px 42px 45px 42px 41px 44px 42px 42px; }
.app { display: flex; align-items: center; justify-content: center; height: 40px; }
.edge { color: #0c72d4; }
.ie { color: #1a8fe0; }
.run { background: linear-gradient(#6cb1f0, #6cb1f0) center bottom/34px 3px no-repeat; }
.active { background: #3b474c linear-gradient(#6cb1f0, #6cb1f0) center bottom/42px 3px no-repeat; }
.gld { width: 26px; height: 26px; border-radius: 5px; background: #0a9bf0; display: flex; align-items: center; justify-content: center; }
.note { display: flex; }
.run-o { background: #9a5a23 linear-gradient(#ff6a00, #ff6a00) center bottom/42px 3px no-repeat; }
.ie2 { width: 24px; height: 26px; background: #1aa6d8; border-radius: 3px; display: flex; align-items: center; justify-content: center; }
.ewhite { color: #fff; }
.q-mark { font: bold 18px "Liberation Sans", sans-serif; fill: #f5d90a; }
.tray { flex: 1; display: flex; align-items: center; }
.cpu { width: 82px; padding-left: 8px; display: flex; flex-direction: column; align-items: center; font: 12px/20px "Noto Sans CJK SC", sans-serif; color: #e8e8e8; }
.cpu span { line-height: 18px; }
.ti { display: flex; justify-content: center; align-items: center; height: 40px; flex: none; }
.t24 { width: 24px; } .t25 { width: 25px; } .t19 { width: 19px; } .t36 { width: 36px; } .t20 { width: 20px; } .t38 { width: 38px; } .t44 { width: 44px; }
.zh { font: bold 14px "Noto Sans CJK SC", sans-serif; }
.s-mini { width: 14px; height: 18px; background: #f04e23; border-radius: 3px; text-align: center; font: bold 14px/18px "Liberation Sans", sans-serif; transform: rotate(-10deg); }
.clock { width: 70px; flex: none; display: flex; flex-direction: column; align-items: center; font-size: 13px; color: #e4e4e4; white-space: nowrap; }
.clock span { line-height: 20px; }

/* section dialog (floats over the workspace) */
.dialog { position: absolute; left: 449px; top: 89px; width: 917px; height: 568px; border-top: 1px solid #222; border-left: 1px solid #333; display: flex; flex-direction: column; background: #b9d3eb; }
.dlg-title { height: 30px; flex: none; background: linear-gradient(#95b0ce, #b9d0e8); padding-left: 6px; line-height: 36px; font-size: 12px; color: #222; }
.dlg-frame { flex: 1; padding: 0 0 3px 6px; min-height: 0; display: flex; border-bottom: 1px solid #2aa3d5; }
.dlg-inner { flex: 1; min-width: 0; background: #f0f0f0; display: flex; flex-direction: column; }
.dlg-tabs { height: 21px; flex: none; display: flex; align-items: flex-end; font-size: 12px; }
.dt { width: 48px; height: 18px; background: #eee; border: 1px solid #ddd; border-bottom: 0; padding-right: 8px; text-align: center; line-height: 18px; }
.dt.on { width: 50px; height: 21px; background: #fcfcfc; border-color: #e4e4e4; line-height: 19px; }
.dlg-panel { border: 1px solid #e2e2e2; border-right: 0; background: #f0f0f0; padding-left: 4px; height: 486px; flex: none; }
.dlg-row { display: flex; align-items: center; white-space: nowrap; }
.one { height: 29px; padding-left: 3px; }
.two { height: 30px; padding-left: 4px; }
.grip { width: 2px; height: 16px; flex: none; margin-right: 5px; background: repeating-linear-gradient(#aaa 0 2px, transparent 2px 4px); }
.dbtn { padding: 0 5px; flex: none; }
.dbtn.active { border: 1px solid #0078d7; background: #e4eef8; height: 23px; line-height: 21px; padding: 0 5px; width: 45px; }
.dbtn.off { color: #8a8a8a; }
.one .sep { margin: 0 3px; height: 14px; }
.dbtn:first-of-type { margin-left: -4px; }
.lbl { margin-right: 1px; }
.rebar-in { width: 135px; height: 25px; border: 1px solid #0078d7; background: #fff; display: flex; align-items: center; padding-left: 2px; font-size: 12px; }
.drop { margin-left: auto; width: 12px; height: 23px; background: #d9e6f2; display: flex; align-items: center; justify-content: center; }
.canvas { height: 424px; background: #000; border: 2px solid #f00; border-right: 0; position: relative; overflow: hidden; }
.cad { display: block; shape-rendering: crispEdges; }
.cad circle { shape-rendering: geometricPrecision; }
.grid-v path { stroke: #555; fill: none; stroke-dasharray: 12 4; }
.outline { fill: none; stroke: #fff; stroke-width: 2.500; }
.dim path { stroke: #0f0; fill: none; }
.leader { stroke: #fff; fill: none; }
.rubber { stroke: #fff; fill: none; stroke-dasharray: 4 4; }
.dots-y circle { fill: #222; stroke: #ff0; stroke-width: 1.500; }
.dots-m circle { fill: #f0f; }
.snap { fill: #2fd5e8; }
.t-grid { font: 11px "Liberation Sans", sans-serif; fill: #555; }
.t-dim { font: 14px "Liberation Sans", sans-serif; fill: #fff; }
.mid-anchor { text-anchor: middle; }
.t-label { font: 15.500px/1 "Noto Sans CJK SC", sans-serif; fill: #fff; }
.t-green { font: 14px "Liberation Mono", monospace; letter-spacing: -.7px; fill: #0f0; }
.float { position: absolute; left: 9px; top: 2px; width: 198px; height: 55px; border: 1px solid #555; background: #f0f0f0; display: flex; flex-direction: column; }
.float-top { height: 7px; background: #fff; flex: none; }
.float-title { height: 20px; background: #a0a0a0; color: #eee; line-height: 20px; padding-left: 1px; flex: none; }
.float-row { flex: 1; display: flex; align-items: center; padding-left: 4px; white-space: nowrap; gap: 4px; }
.first-f { margin-right: 1px; }
.fbtn.active { border: 1px solid #0078d7; background: #e4eef8; width: 34px; height: 23px; text-align: center; line-height: 21px; margin-right: 1px; }
.float-row .caret { margin-left: 3px; margin-right: 1px; }
.fcombo { width: 58px; height: 21px; border: 1px solid #999; background: #f0f0f0; display: flex; align-items: center; justify-content: flex-end; padding-right: 4px; }
.float-row .fcombo .caret { margin: 0; }
.dlg-status { flex: 1; display: flex; gap: 3px; padding: 1px 0 0 0; }
.ds { height: 25px; border: 1px solid #ddd; background: #f2f2f2; line-height: 23px; white-space: nowrap; }
.coord { width: 147px; padding-left: 7px; }
.coord .m { font-size: 12px; }
.msg { flex: 1; padding-left: 1px; }

.badge76 { position: absolute; left: 1020px; top: -29px; width: 48px; height: 48px; border-radius: 50%; background: #3fc463; color: #fff; font-weight: 700; font-size: 12px; text-align: center; padding-top: 29px; line-height: 14px; box-shadow: 0 1px 3px 1px #888; }

.ime { position: absolute; left: 851px; top: 24px; width: 166px; height: 24px; background: #f5f9fd; border: 1px solid #c9d8e8; display: flex; align-items: center; gap: 9px; padding-left: 16px; }
.ime-logo { position: absolute; left: -14px; top: -4px; width: 23px; height: 23px; border-radius: 5px; background: #f04e23; color: #fff; font: bold 20px/23px "Liberation Sans", sans-serif; text-align: center; transform: rotate(-12deg); box-shadow: 0 1px 2px #c8c8c8; }
.ime-zh { font: bold 15px "Noto Sans CJK SC", sans-serif; color: #1b76d3; }
.ime-dot { font: bold 13px "Liberation Sans", sans-serif; color: #1b76d3; margin-right: 3px; }

.marks { position: absolute; left: 0; top: 0; pointer-events: none; shape-rendering: crispEdges; }
.marks ellipse { fill: none; stroke: #f00; stroke-width: 3; }
```
